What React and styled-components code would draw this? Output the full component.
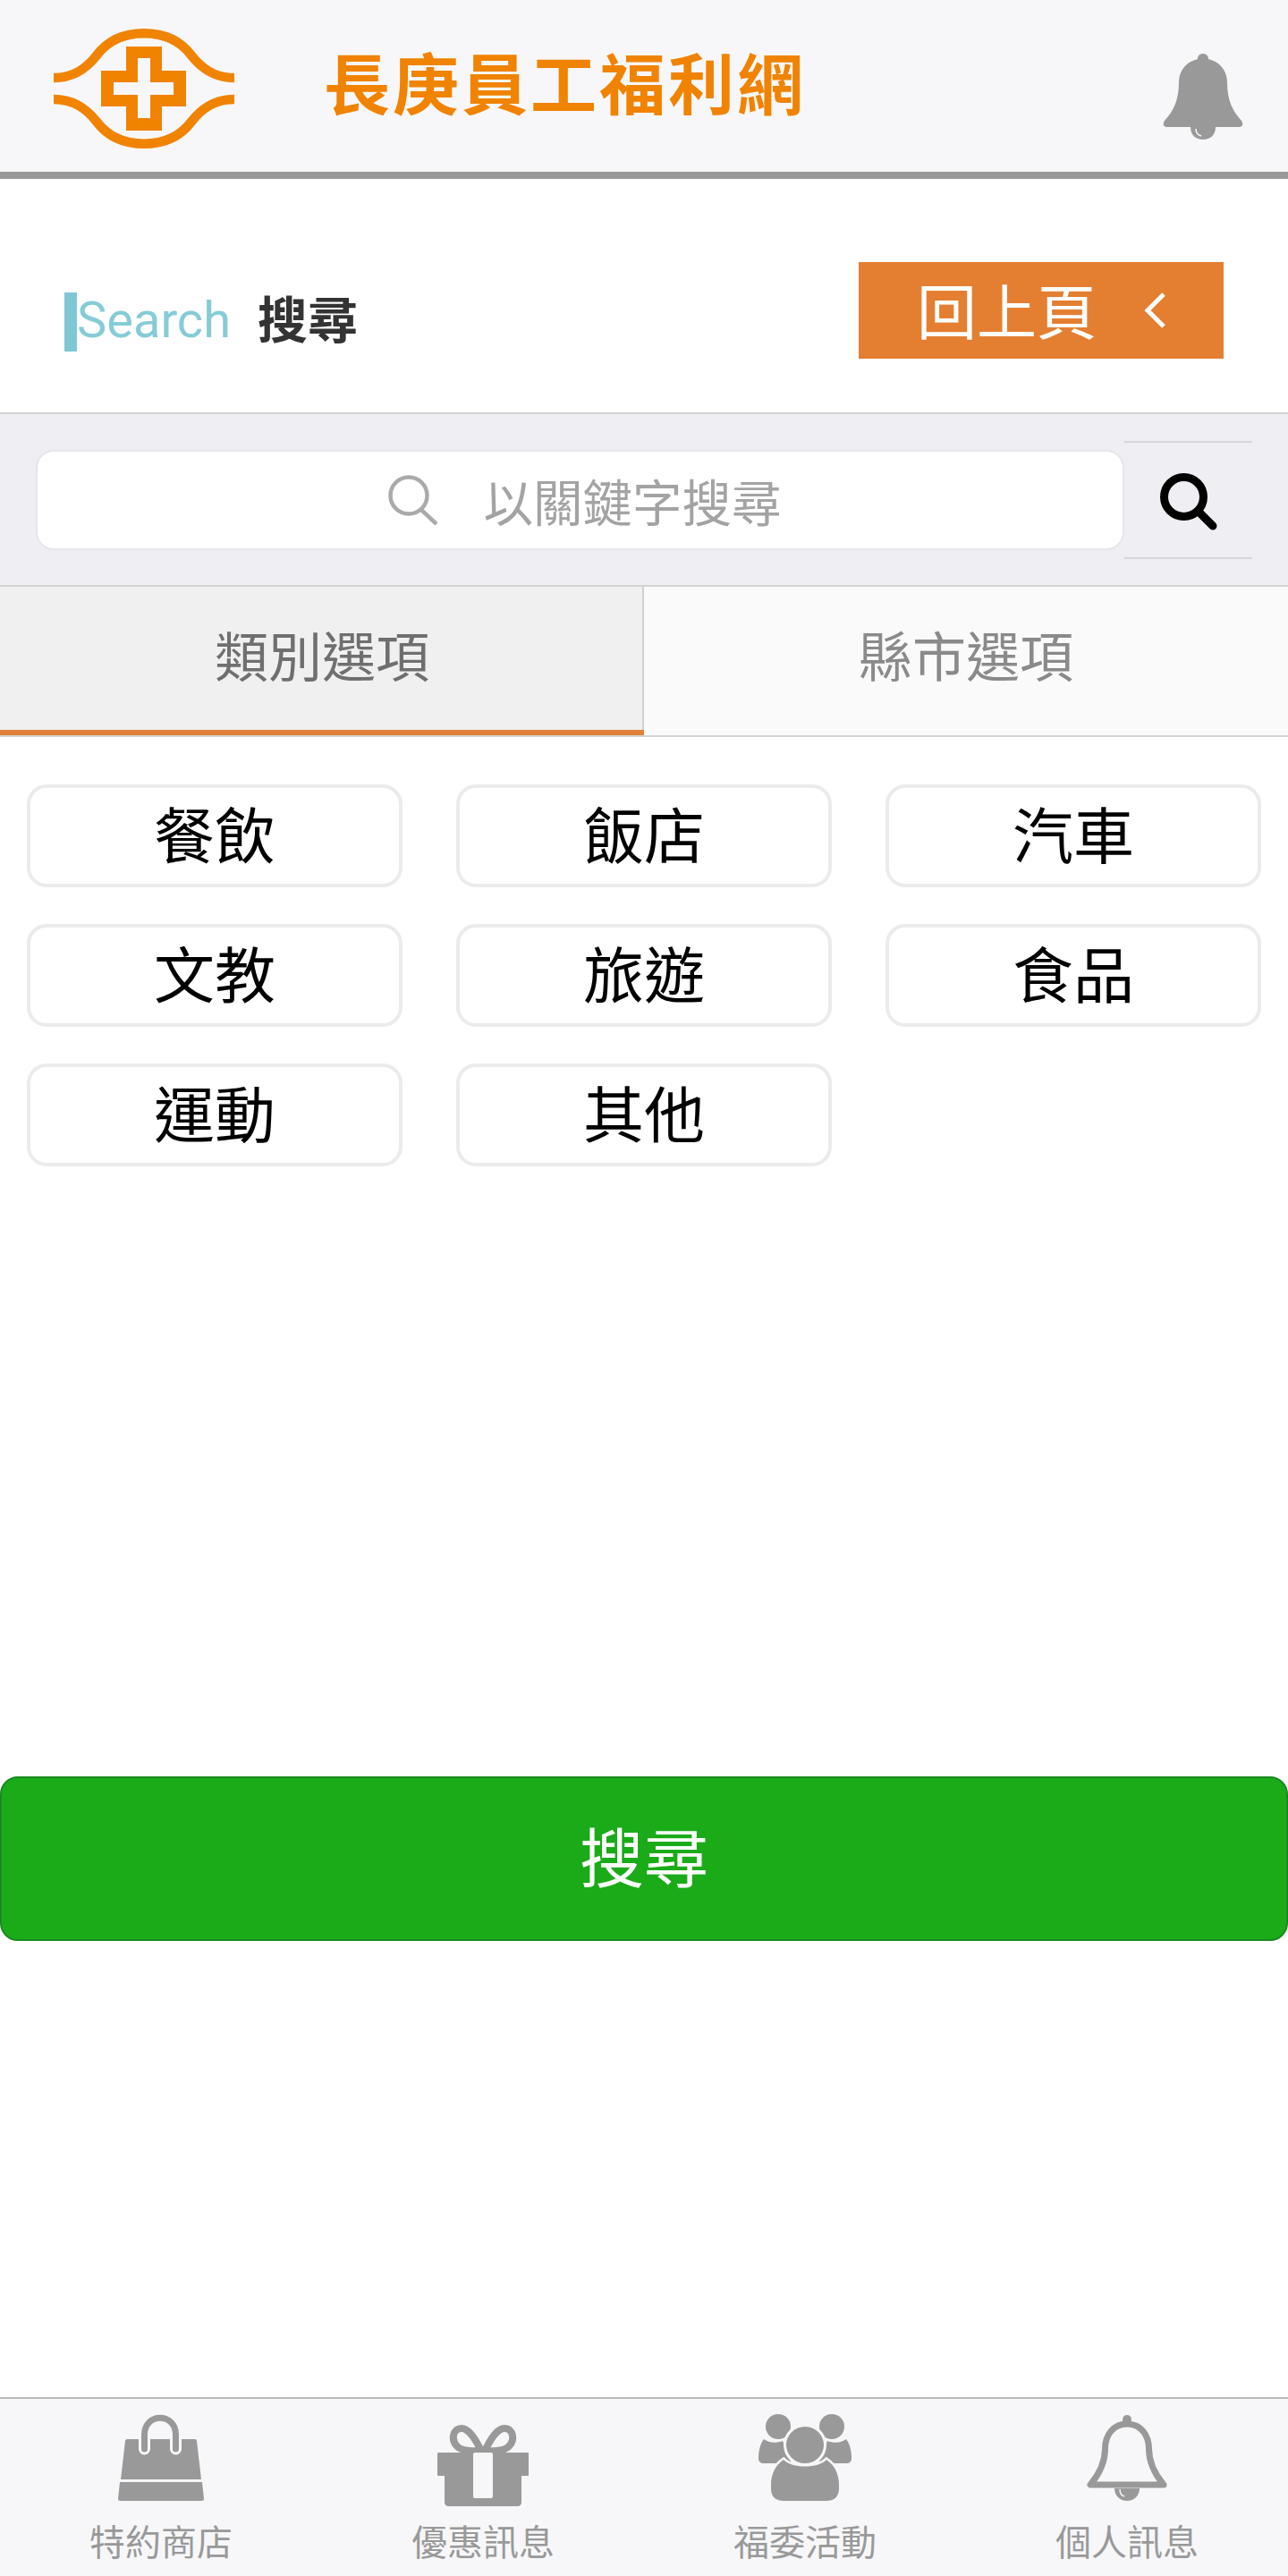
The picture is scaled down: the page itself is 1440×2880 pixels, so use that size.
import styled, { createGlobalStyle } from "styled-components";

const GlobalStyle = createGlobalStyle`
  html, body {
    margin: 0;
    padding: 0;
    background: #fff;
  }
  * {
    box-sizing: border-box;
  }
`;

const cjk = `"Noto Sans CJK TC", "Noto Sans CJK SC", sans-serif`;
const barBg = "#f7f7f9";

const Page = styled.div`
  display: flex;
  flex-direction: column;
  width: 1440px;
  height: 2880px;
  font-family: ${cjk};
  background: #fff;
`;

const Header = styled.header`
  display: flex;
  align-items: center;
  height: 200px;
  padding: 0 50px 8px 60px;
  background: ${barBg};
  border-bottom: 8px solid #999;
`;

const Logo = styled.svg`
  width: 202px;
  height: 134px;
  margin-top: 14px;
  flex: none;
`;

const Brand = styled.div`
  margin-left: 100px;
  margin-bottom: 4px;
  font-size: 74px;
  line-height: 1;
  font-weight: 700;
  letter-spacing: 3px;
  color: #f08300;
  white-space: nowrap;
`;

const HeaderBell = styled.svg`
  width: 90px;
  height: 96px;
  margin-left: auto;
  margin-top: 32px;
  flex: none;
`;

const TitleRow = styled.div`
  display: flex;
  align-items: center;
  justify-content: space-between;
  height: 263px;
  padding: 0 72px;
  border-bottom: 2px solid #d4d4d4;
`;

const Title = styled.div`
  display: flex;
  align-items: center;
  margin-top: 58px;
`;

const Accent = styled.span`
  display: block;
  width: 14px;
  height: 66px;
  background: #7fc8d3;
`;

const TitleEn = styled.span`
  margin-bottom: 4px;
  font-family: Roboto, sans-serif;
  font-weight: 400;
  font-size: 56px;
  color: #86ccd6;
`;

const TitleZh = styled.span`
  margin-left: 30px;
  margin-bottom: 12px;
  font-size: 56px;
  font-weight: 700;
  color: #333;
`;

const BackButton = styled.button`
  display: flex;
  align-items: center;
  width: 408px;
  height: 108px;
  margin-top: 32px;
  padding: 0 0 4px 65px;
  border: 0;
  background: #e47f32;
  color: #fff;
  font-family: ${cjk};
  font-size: 67px;
  font-weight: 400;
  line-height: 1;
`;

const BackChevron = styled.svg`
  width: 24px;
  height: 42px;
  margin-left: 53px;
  margin-top: 4px;
`;

const SearchBar = styled.div`
  display: flex;
  align-items: center;
  height: 193px;
  padding: 0 40px;
  background: #eeeef3;
  border-bottom: 2px solid #d4d4d4;
`;

const SearchInput = styled.div`
  display: flex;
  align-items: center;
  justify-content: center;
  flex: 1;
  height: 112px;
  padding-left: 11px;
  background: #fff;
  border: 2px solid #e6e6ea;
  border-radius: 20px;
  font-size: 55.5px;
  font-weight: 400;
  color: #a3a3a3;
`;

const InputIcon = styled.svg`
  width: 56px;
  height: 56px;
  margin-right: 50px;
`;

const SearchButton = styled.div`
  display: flex;
  align-items: center;
  justify-content: center;
  width: 143px;
  height: 132px;
  border-top: 2px solid #d6d6dc;
  border-bottom: 2px solid #d6d6dc;
`;

const SearchGlyph = styled.svg`
  width: 64px;
  height: 64px;
  margin-top: 4px;
`;

const Tabs = styled.div`
  display: flex;
  height: 168px;
  border-bottom: 2px solid #d4d4d4;
`;

const Tab = styled.div`
  display: flex;
  align-items: center;
  justify-content: center;
  width: 720px;
  padding-bottom: 12px;
  background: ${(props) => (props.$active ? "#f0f0f0" : "#fafafa")};
  border-bottom: 6px solid ${(props) => (props.$active ? "#e0803a" : "#fafafa")};
  box-shadow: ${(props) => (props.$active ? "inset -2px 0 0 #d0d0d0" : "none")};
  font-size: 60px;
  font-weight: 400;
  color: ${(props) => (props.$active ? "#6f6f6f" : "#8a8a8a")};
`;

const Options = styled.div`
  display: grid;
  grid-template-columns: repeat(3, 420px);
  column-gap: 60px;
  row-gap: 41px;
  padding: 53px 30px 0;
`;

const Option = styled.div`
  display: flex;
  align-items: center;
  justify-content: center;
  height: 115px;
  padding-bottom: 9px;
  border: 4px solid #ebebeb;
  border-radius: 22px;
  font-size: 68px;
  font-weight: 400;
  color: #000;
`;

const Submit = styled.button`
  display: flex;
  align-items: center;
  justify-content: center;
  width: 100%;
  height: 184px;
  margin-top: 682px;
  padding: 0 0 12px;
  border: 2px solid #188a20;
  border-radius: 20px;
  background: #1bab19;
  color: #fff;
  font-family: ${cjk};
  font-size: 72px;
  font-weight: 400;
`;

const BottomNav = styled.nav`
  display: grid;
  grid-template-columns: repeat(4, 360px);
  height: 200px;
  margin-top: auto;
  background: ${barBg};
  border-top: 2px solid #bbb;
`;

const NavItem = styled.div`
  display: flex;
  flex-direction: column;
  align-items: center;
  padding-top: 16px;
  font-size: 40px;
  font-weight: 400;
  line-height: 1;
  color: #999;
`;

const NavIcon = styled.svg`
  width: 110px;
  height: 106px;
  margin-bottom: 16px;
`;

const categories = ["餐飲", "飯店", "汽車", "文教", "旅遊", "食品", "運動", "其他"];

const Bag = () => (
  <NavIcon viewBox="0 0 110 106">
    <path d="M17 29H93C94 29 95 30 95 31L100 74H10L15 31C15 30 16 29 17 29Z" fill="#999" />
    <path d="M9 77H101L103 96C103 97 102 98 100 98H10C8 98 7 97 7 96Z" fill="#999" />
    <path d="M36.500 40V24C36.500 -1 71.500 -1 71.500 24V40" fill="none" stroke={barBg} strokeWidth="13" strokeLinecap="round" />
    <path d="M36.500 40V24C36.500 -1 71.500 -1 71.500 24V40" fill="none" stroke="#999" strokeWidth="7" strokeLinecap="round" />
  </NavIcon>
);

const Gift = () => (
  <NavIcon viewBox="0 0 110 106">
    <path d="M53 42C46 28 39 17 31 17C21 17 19 30 26 37C31 42 44 43 53 42Z" fill="none" stroke="#999" strokeWidth="8" />
    <path d="M57 42C64 28 71 17 79 17C89 17 91 30 84 37C79 42 66 43 57 42Z" fill="none" stroke="#999" strokeWidth="8" />
    <path d="M5 44H105C106 44 106 45 106 45V69C106 70 105 70 105 70H98V100C98 102 96 104 94 104H16C14 104 12 102 12 100V70H5C4 70 4 69 4 69V45C4 45 4 44 5 44Z" fill="#999" />
    <rect x="44" y="44" width="22" height="51" rx="2" fill={barBg} />
  </NavIcon>
);

const People = () => (
  <NavIcon viewBox="0 0 110 106">
    <path d="M9 29C14 33 22 34 30 31L40 56H9C5 56 3 54 3 50C3 42 5 34 9 29Z" fill="#999" />
    <path d="M101 29C96 33 88 34 80 31L70 56H101C105 56 107 54 107 50C107 42 105 34 101 29Z" fill="#999" />
    <circle cx="25" cy="15" r="14" fill="#999" stroke={barBg} strokeWidth="5" paintOrder="stroke" />
    <circle cx="85" cy="15" r="14" fill="#999" stroke={barBg} strokeWidth="5" paintOrder="stroke" />
    <path d="M31 52C22 58 17 68 17 80V84C17 93 22 98 31 98H79C88 98 93 93 93 84V80C93 68 88 58 79 52C70 62 40 62 31 52Z" fill="#999" stroke={barBg} strokeWidth="5" paintOrder="stroke" />
    <ellipse cx="55" cy="35.500" rx="21" ry="20.500" fill="#999" stroke={barBg} strokeWidth="6" paintOrder="stroke" />
  </NavIcon>
);

const OutlineBell = () => (
  <NavIcon viewBox="0 0 110 106">
    <path d="M55 12C40 12 30.500 24 30.500 40C30.500 56 24 68 14 80H96C86 68 79.500 56 79.500 40C79.500 24 70 12 55 12Z" fill="none" stroke="#999" strokeWidth="7" strokeLinejoin="round" />
    <circle cx="55" cy="7" r="5" fill="#999" />
    <path d="M41 84H69C69 92 63 98 55 98C47 98 41 92 41 84Z" fill="#999" />
    <path d="M47 85c0 4 2 7 5 8" fill="none" stroke={barBg} strokeWidth="1.500" />
  </NavIcon>
);

export default function App() {
  return (
    <Page>
      <GlobalStyle />
      <Header>
        <Logo viewBox="0 0 202 134">
          <path
            d="M0 55C23 55 37 44 48 30C60 14 78 5.300 101 5.300C124 5.300 142 14 154 30C165 44 179 55 202 55"
            fill="none"
            stroke="#f08300"
            strokeWidth="10.500"
          />
          <path
            d="M0 79C23 79 37 90 48 104C60 120 78 128.700 101 128.700C124 128.700 142 120 154 104C165 90 179 79 202 79"
            fill="none"
            stroke="#f08300"
            strokeWidth="10.500"
          />
          <path
            fillRule="evenodd"
            fill="#f08300"
            d="M81 20h40v27h27v40h-27v27H81V87H53V47h28zM94 33v27H67v14h27v26h14V74h26V60h-26V33z"
          />
        </Logo>
        <Brand>長庚員工福利網</Brand>
        <HeaderBell viewBox="0 0 90 96">
          <path
            d="M39 6C27 9 18 18 18 32C18 52 12 64 2 75C0 78 0 82 5 82H85C90 82 90 78 88 75C78 64 72 52 72 32C72 18 63 9 51 6C51 -2 39 -2 39 6Z"
            fill="#999"
          />
          <path d="M31 82H59C59 91 53 96 45 96C37 96 31 91 31 82Z" fill="#999" />
          <path d="M37 84c0 4 2 7 6 8" fill="none" stroke={barBg} strokeWidth="1.500" />
        </HeaderBell>
      </Header>

      <TitleRow>
        <Title>
          <Accent />
          <TitleEn>Search</TitleEn>
          <TitleZh>搜尋</TitleZh>
        </Title>
        <BackButton>
          回上頁
          <BackChevron viewBox="0 0 24 42">
            <path d="M22 3L4 21l18 18" fill="none" stroke="#fff" strokeWidth="5" />
          </BackChevron>
        </BackButton>
      </TitleRow>

      <SearchBar>
        <SearchInput>
          <InputIcon viewBox="0 0 56 56">
            <circle cx="23" cy="23" r="20.500" fill="none" stroke="#aaa" strokeWidth="4.500" />
            <path d="M36 38l18 17" stroke="#aaa" strokeWidth="4.500" />
          </InputIcon>
          以關鍵字搜尋
        </SearchInput>
        <SearchButton>
          <SearchGlyph viewBox="0 0 64 64">
            <circle cx="26.500" cy="26.500" r="22" fill="none" stroke="#000" strokeWidth="9" />
            <path d="M44 44l15 15" stroke="#000" strokeWidth="9" strokeLinecap="round" />
          </SearchGlyph>
        </SearchButton>
      </SearchBar>

      <Tabs>
        <Tab $active>類別選項</Tab>
        <Tab>縣市選項</Tab>
      </Tabs>

      <Options>
        {categories.map((name) => (
          <Option key={name}>{name}</Option>
        ))}
      </Options>

      <Submit>搜尋</Submit>

      <BottomNav>
        <NavItem>
          <Bag />
          特約商店
        </NavItem>
        <NavItem>
          <Gift />
          優惠訊息
        </NavItem>
        <NavItem>
          <People />
          福委活動
        </NavItem>
        <NavItem>
          <OutlineBell />
          個人訊息
        </NavItem>
      </BottomNav>
    </Page>
  );
}
